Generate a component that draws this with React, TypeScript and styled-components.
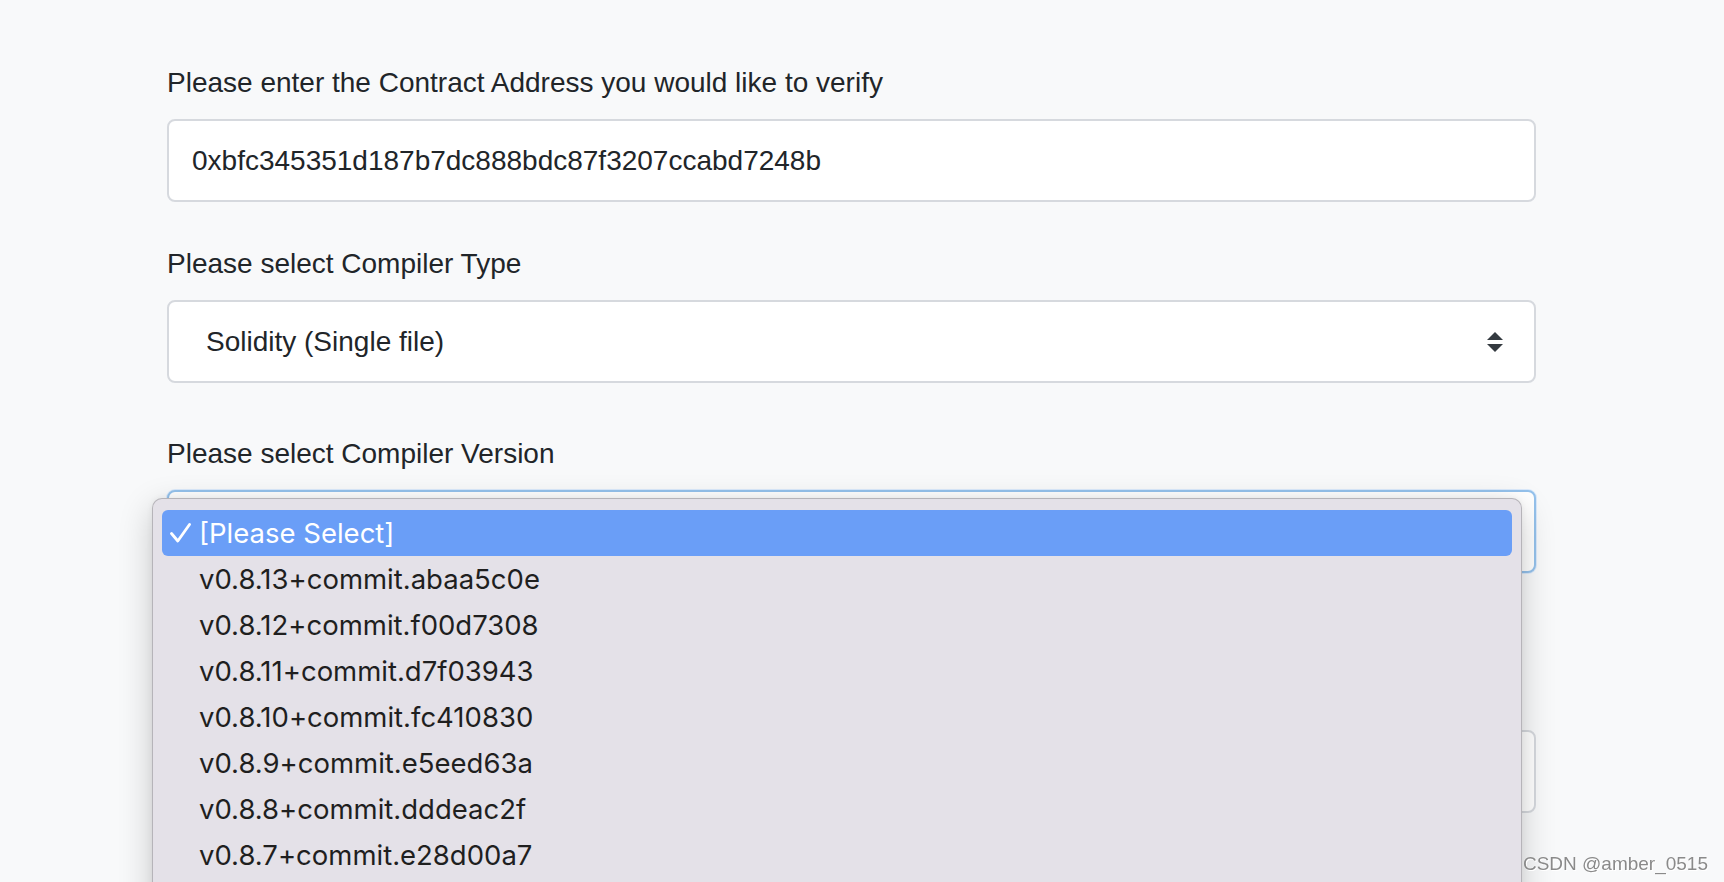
import styled, { createGlobalStyle } from "styled-components";

const versions = [
  "[Please Select]",
  "v0.8.13+commit.abaa5c0e",
  "v0.8.12+commit.f00d7308",
  "v0.8.11+commit.d7f03943",
  "v0.8.10+commit.fc410830",
  "v0.8.9+commit.e5eed63a",
  "v0.8.8+commit.dddeac2f",
  "v0.8.7+commit.e28d00a7",
];

function SelectArrows() {
  return (
    <svg width="16" height="20" viewBox="0 0 4 5">
      <path fill="#343a40" d="M2 0L0 2h4zm0 5L0 3h4z" />
    </svg>
  );
}

function CheckMark() {
  return (
    <svg width="21" height="20" viewBox="0 0 21 20">
      <path
        d="M1.5 10.5 L7.8 18 L19.5 1.5"
        fill="none"
        stroke="#ffffff"
        strokeWidth="2.8"
        strokeLinecap="round"
        strokeLinejoin="round"
      />
    </svg>
  );
}

function App() {
  return (
    <>
      <GlobalStyle />
      <Page>
        <Form>
          <Field $after={45}>
            <Label>Please enter the Contract Address you would like to verify</Label>
            <TextInput
              readOnly
              value="0xbfc345351d187b7dc888bdc87f3207ccabd7248b"
            />
          </Field>

          <Field $after={54}>
            <Label>Please select Compiler Type</Label>
            <SelectBox>
              <SelectValue>Solidity (Single file)</SelectValue>
              <SelectArrows />
            </SelectBox>
          </Field>

          {/* the open list covers the rest of the form */}
          <Field $after={157}>
            <Label>Please select Compiler Version</Label>
            <SelectWrap>
              <SelectBox $focused>
                <SelectValue />
                <SelectArrows />
              </SelectBox>
              <Popup>
                {versions.map((v, i) => (
                  <Option key={v} $selected={i === 0}>
                    <CheckSlot>{i === 0 && <CheckMark />}</CheckSlot>
                    {v}
                  </Option>
                ))}
              </Popup>
            </SelectWrap>
          </Field>

          <Field $after={0}>
            <SelectBox>
              <SelectValue />
              <SelectArrows />
            </SelectBox>
          </Field>
        </Form>
      </Page>
      <Watermark>CSDN @amber_0515</Watermark>
    </>
  );
}

export default App;

const GlobalStyle = createGlobalStyle`
  html, body {
    margin: 0;
    padding: 0;
    height: 100%;
    overflow: hidden;
  }

  body {
    background: #f8f9fa;
    font-family: "Liberation Sans", Arial, sans-serif;
    color: #212529;
  }

  * {
    box-sizing: border-box;
  }
`;

const Page = styled.div`
  padding: 66px 0 0 167px;
`;

const Form = styled.div`
  width: 1369px;
  display: flex;
  flex-direction: column;
`;

const Field = styled.div<{ $after: number }>`
  display: flex;
  flex-direction: column;
  margin-bottom: ${(p) => p.$after}px;
`;

const Label = styled.label`
  font-size: 28px;
  line-height: 34px;
  margin-bottom: 19px;
  color: #212529;
`;

const TextInput = styled.input`
  width: 100%;
  height: 83px;
  padding: 0 23px;
  border: 2px solid #d6d9de;
  border-radius: 8px;
  background: #ffffff;
  font-family: "Liberation Sans", Arial, sans-serif;
  font-size: 28px;
  color: #212529;
  outline: none;
`;

const SelectWrap = styled.div`
  position: relative;
`;

const SelectBox = styled.div<{ $focused?: boolean }>`
  height: 83px;
  padding: 0 31px 0 37px;
  display: flex;
  align-items: center;
  justify-content: space-between;
  border: 2px solid ${(p) => (p.$focused ? "#95c2ec" : "#d6d9de")};
  border-radius: 8px;
  background: #ffffff;
  box-shadow: ${(p) =>
    p.$focused ? "0 0 0 1px rgba(128, 189, 255, 0.25)" : "none"};
`;

const SelectValue = styled.span`
  font-size: 28px;
  color: #212529;
`;

const Popup = styled.div`
  position: absolute;
  top: 8px;
  left: -15px;
  right: 14px;
  height: 430px;
  padding: 11px 9px 10px;
  background: #e4e1e8;
  border: 1px solid rgba(0, 0, 0, 0.2);
  border-radius: 10px;
  box-shadow: 0 10px 34px rgba(0, 0, 0, 0.2), 0 0 6px rgba(0, 0, 0, 0.06);
  z-index: 5;
`;

const Option = styled.div<{ $selected?: boolean }>`
  height: 46px;
  padding-left: 8px;
  display: flex;
  align-items: center;
  border-radius: 6px;
  font-family: Inter, "Liberation Sans", sans-serif;
  font-size: 27.5px;
  color: ${(p) => (p.$selected ? "#ffffff" : "#1f1f1f")};
  background: ${(p) => (p.$selected ? "#6a9ef7" : "transparent")};
`;

const CheckSlot = styled.span`
  width: 29px;
  display: flex;
  align-items: center;
`;

const Watermark = styled.div`
  position: fixed;
  right: 16px;
  bottom: 9px;
  font-family: "Liberation Sans", Arial, sans-serif;
  font-size: 19px;
  line-height: 1;
  color: #8a8a8a;
  text-shadow: 0 0 1px #ffffff, 1px 1px 0 #ffffff;
  z-index: 10;
`;
